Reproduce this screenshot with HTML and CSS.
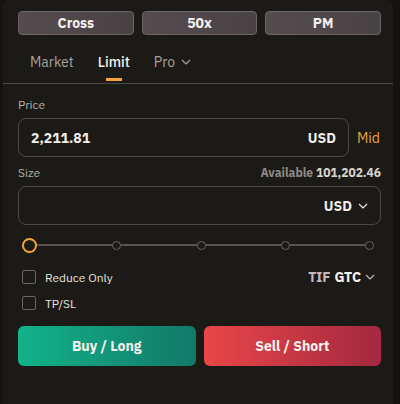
FILE: index.html
```html
<!DOCTYPE html>
<html lang="en">
<head>
    <meta charset="UTF-8">
    <meta name="viewport" content="width=device-width, initial-scale=1.0">
    <title>Order form</title>
    <link rel="stylesheet" href="styles.css">
</head>
<body>
    <div class="panel">
        <div class="modes">
            <button class="mode">Cross</button>
            <button class="mode">50x</button>
            <button class="mode">PM</button>
        </div>
        <div class="tabs">
            <span class="tab">Market</span>
            <span class="tab active">Limit</span>
            <span class="tab">Pro
                <svg class="chev" width="10" height="6" viewBox="0 0 10 6"><path d="M1 1l4 4 4-4" fill="none" stroke="currentColor" stroke-width="1.2"/></svg>
            </span>
        </div>
        <div class="form">
            <div class="label">Price</div>
            <div class="price-row">
                <div class="field">
                    <span class="value">2,211.81</span>
                    <span class="unit">USD</span>
                </div>
                <span class="mid">Mid</span>
            </div>
            <div class="label size-label">
                <span>Size</span>
                <span class="avail">Available <b>101,202.46</b></span>
            </div>
            <div class="field size-field">
                <span class="value"></span>
                <span class="unit">USD
                    <svg class="chev" width="10" height="6" viewBox="0 0 10 6"><path d="M1 1l4 4 4-4" fill="none" stroke="currentColor" stroke-width="1.2"/></svg>
                </span>
            </div>
            <div class="slider">
                <span class="knob"></span>
                <span class="track"></span>
                <span class="dot"></span>
                <span class="track"></span>
                <span class="dot"></span>
                <span class="track"></span>
                <span class="dot"></span>
                <span class="track"></span>
                <span class="dot"></span>
            </div>
            <div class="opts">
                <label class="check"><span class="box"></span>Reduce Only</label>
                <span class="tif">TIF <b>GTC</b>
                    <svg class="chev" width="10" height="6" viewBox="0 0 10 6"><path d="M1 1l4 4 4-4" fill="none" stroke="currentColor" stroke-width="1.2"/></svg>
                </span>
            </div>
            <label class="check"><span class="box"></span>TP/SL</label>
            <div class="actions">
                <button class="btn buy">Buy / Long</button>
                <button class="btn sell">Sell / Short</button>
            </div>
        </div>
    </div>
</body>
</html>
```

FILE: styles.css
```css
body {
    margin: 0;
    background: #141310;
    font-family: "IBM Plex Sans", Roboto, "Liberation Sans", sans-serif;
    color: #f2efea;
}
.panel {
    width: 390px;
    height: 404px;
    margin-left: 3px;
    padding-top: 11px;
    box-sizing: border-box;
    background: #1c1a16;
    border-radius: 6px 6px 0 0;
}
.modes {
    display: flex;
    gap: 8px;
    padding: 0 12px 0 15px;
}
.mode {
    flex: 1;
    height: 24px;
    border: 1px solid #6c6467;
    border-radius: 4px;
    background: linear-gradient(to right, #554c50, #494245);
    color: #f4f1ee;
    font-family: inherit;
    font-size: 14px;
    font-weight: bold;
    padding: 0;
}
.tabs {
    display: flex;
    height: 37px;
    padding-left: 27px;
    border-bottom: 1px solid #4a4744;
    margin-top: 12px;
    box-sizing: border-box;
    align-items: flex-start;
    padding-top: 6px;
}
.tab {
    font-size: 14px;
    color: #a7a29c;
    position: relative;
    margin-right: 24px;
    display: flex;
    align-items: center;
    gap: 6px;
}
.tab.active {
    color: #f4f1ec;
    font-weight: 500;
}
.tab.active::after {
    content: "";
    position: absolute;
    left: 8px;
    width: 16px;
    height: 3px;
    background: #f5a33a;
    top: 25px;
}
.form {
    padding: 0 12px 0 15px;
}
.label {
    font-size: 12px;
    color: #b3aea8;
    margin-top: 13px;
    height: 15px;
}
.price-row {
    display: flex;
    align-items: center;
    gap: 8px;
    margin-top: 6px;
}
.field {
    flex: 1;
    height: 39px;
    border: 1px solid #4c4844;
    border-radius: 8px;
    box-sizing: border-box;
    display: flex;
    align-items: center;
    justify-content: space-between;
    padding: 0 12px;
}
.value {
    font-size: 14px;
    font-weight: bold;
}
.unit {
    font-size: 14px;
    font-weight: bold;
    display: flex;
    align-items: center;
    gap: 6px;
}
.mid {
    color: #f0a53c;
    font-size: 14px;
    width: 24px;
}
.size-label {
    display: flex;
    justify-content: space-between;
    margin-top: 8px;
}
.avail {
    color: #8e8984;
    font-weight: bold;
    font-size: 12px;
}
.avail b {
    color: #d8d4cf;
}
.size-field {
    flex: none;
    margin-top: 6px;
    height: 39px;
}
.slider {
    display: flex;
    align-items: center;
    height: 18px;
    margin-top: 11px;
    padding: 0 7px 0 4px;
}
.knob {
    width: 11px;
    height: 11px;
    border: 2px solid #f5a33a;
    border-radius: 50%;
}
.dot {
    width: 7px;
    height: 7px;
    border: 1px solid #6a6266;
    border-radius: 50%;
}
.track {
    flex: 1;
    height: 2px;
    background: #5a5356;
}
.opts {
    display: flex;
    justify-content: space-between;
    align-items: center;
    margin-top: 14px;
}
.check {
    display: flex;
    align-items: center;
    gap: 9px;
    font-size: 12px;
    color: #e6e2dd;
    padding-left: 4px;
    height: 18px;
}
.opts + .check {
    margin-top: 8px;
}
.box {
    width: 12px;
    height: 12px;
    border: 1px solid #6a6562;
    border-radius: 2px;
}
.tif {
    font-size: 14px;
    font-weight: bold;
    color: #c8b8bd;
    display: flex;
    align-items: center;
    gap: 4px;
    padding-right: 6px;
}
.tif b {
    color: #f4f1ec;
}
.actions {
    display: flex;
    gap: 8px;
    margin-top: 14px;
}
.btn {
    flex: 1;
    height: 40px;
    border: none;
    border-radius: 6px;
    color: #f7f4f0;
    font-family: inherit;
    font-size: 14px;
    font-weight: bold;
}
.buy {
    background: linear-gradient(to right, #12b38a, #137868);
}
.sell {
    background: linear-gradient(to right, #ea4648, #a3283f);
}
```
